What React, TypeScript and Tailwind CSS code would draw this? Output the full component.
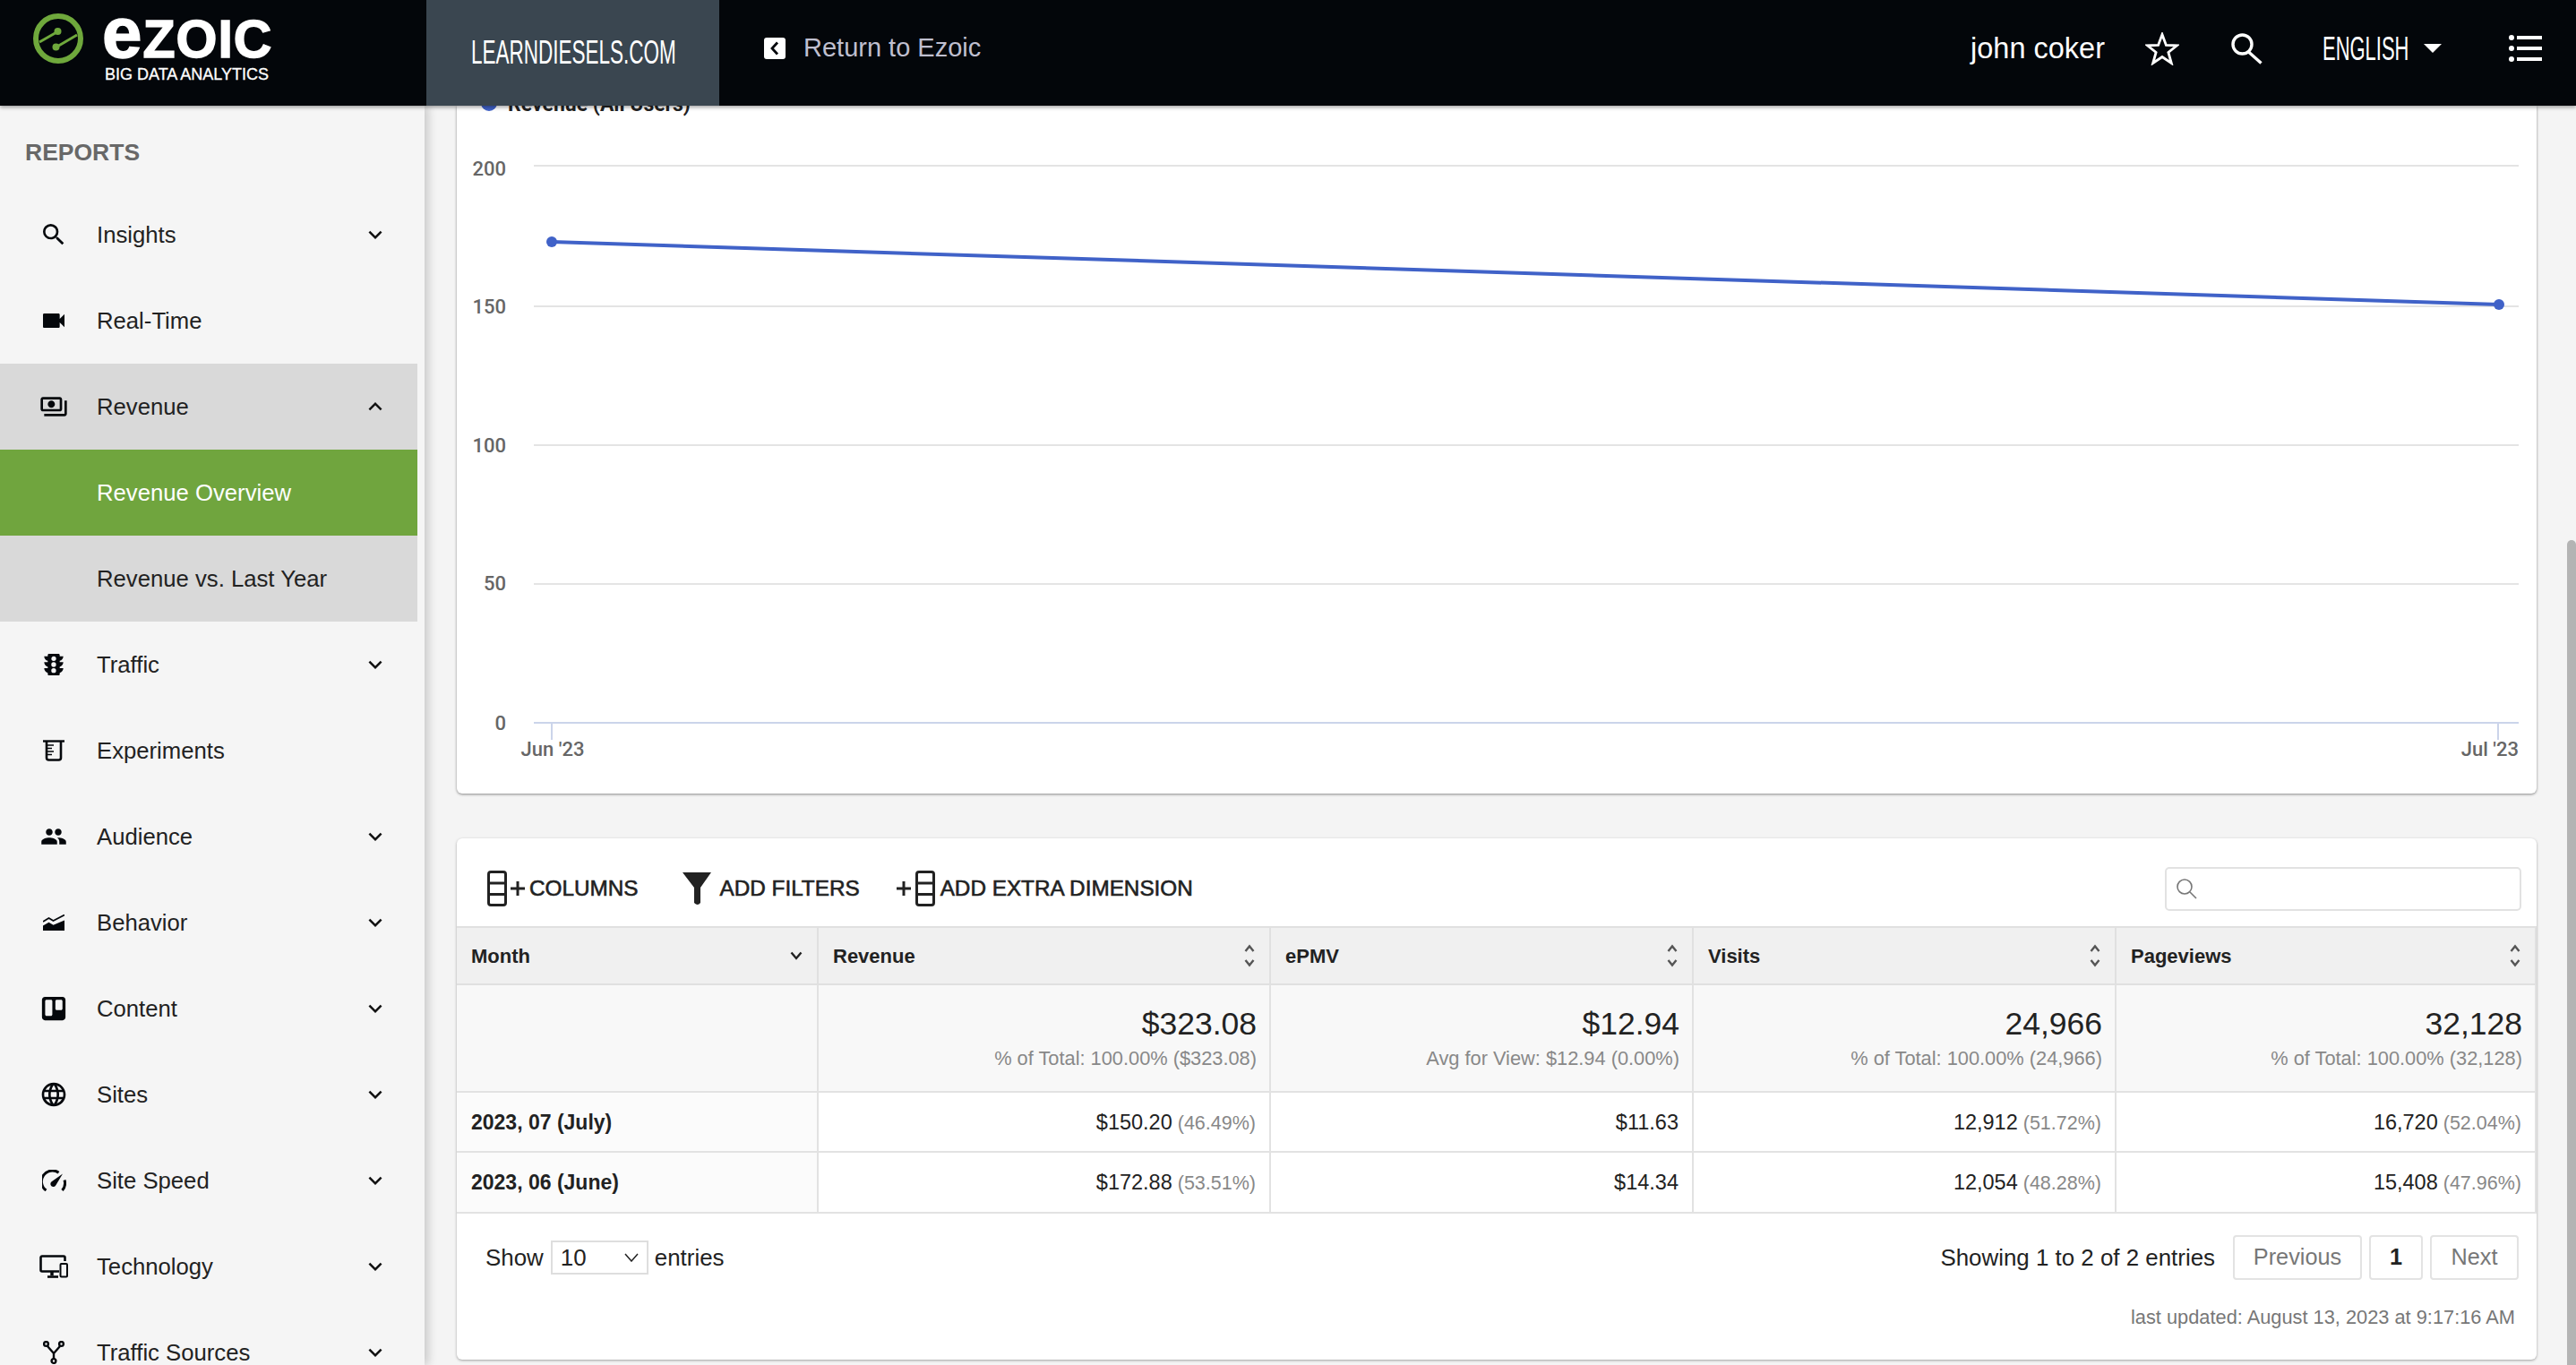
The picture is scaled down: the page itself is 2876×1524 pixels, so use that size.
import React from "react";
import {
  MdSearch,
  MdVideocam,
  MdOutlinePayments,
  MdTraffic,
  MdPeople,
  MdLanguage,
  MdKeyboardArrowDown,
  MdKeyboardArrowUp,
} from "react-icons/md";
import { FaTrello } from "react-icons/fa";

const Beaker = () => (
  <svg width="24" height="24" viewBox="0 0 24 24" fill="none" stroke="#05080c">
    <path d="M0 1.5H24" strokeWidth="2.4" />
    <path d="M4 2v18a2.5 2.5 0 0 0 2.5 2.5h11a2.5 2.5 0 0 0 2.5-2.5V2" strokeWidth="2.6" />
    <path d="M5 6h7M5 9.5h5M5 13h7M5 16.500h5" strokeWidth="1.6" />
  </svg>
);
const AreaLine = () => (
  <svg width="24" height="18" viewBox="0 0 24 18" fill="#05080c">
    <path d="M0 18v-5.500l6.500-3.700 5 3L24 6.500V18z" />
    <path d="M0 8l6.500-4 5 3L24 .5" fill="none" stroke="#05080c" strokeWidth="1.800" />
  </svg>
);
const Gauge = () => (
  <svg width="27" height="24" viewBox="0 0 27 24" fill="none">
    <path d="M4.500 23A12 12 0 0 1 18.500 3.200" stroke="#05080c" strokeWidth="3" />
    <path d="M25 11.500A12 12 0 0 1 22.500 23" stroke="#05080c" strokeWidth="3" />
    <path d="M23 4.500L15.500 17a3.200 3.200 0 1 1-4.500-4z" fill="#05080c" />
  </svg>
);
const Devices = () => (
  <svg width="32" height="26" viewBox="0 0 32 26" fill="none" stroke="#05080c">
    <path d="M22 18.500H3a1.500 1.500 0 0 1-1.500-1.500V3A1.500 1.500 0 0 1 3 1.500h24A1.500 1.500 0 0 1 28.500 3v4" strokeWidth="2.600" />
    <path d="M14 19v4" strokeWidth="3.500" />
    <path d="M9 24.500h12" strokeWidth="2.600" />
    <rect x="23.500" y="10" width="7.500" height="14.500" rx="1" strokeWidth="2" fill="#f5f5f5" />
  </svg>
);
const Branch = () => (
  <svg width="24" height="26" viewBox="0 0 24 26" fill="none" stroke="#05080c" strokeWidth="2.400">
    <circle cx="3.500" cy="3.500" r="2.400" />
    <circle cx="20.500" cy="3.500" r="2.400" />
    <circle cx="12" cy="22.500" r="2.400" />
    <path d="M5 6l7 8 7-8M12 14v6" />
  </svg>
);

type Item = { label: string; icon: React.ReactNode; arrow?: "down" | "up" | null; state?: "open" | "active" | "sub" };

const items: Item[] = [
  { label: "Insights", icon: <MdSearch size={32} color="#05080c" />, arrow: "down" },
  { label: "Real-Time", icon: <MdVideocam size={32} color="#05080c" /> },
  { label: "Revenue", icon: <MdOutlinePayments size={32} color="#05080c" />, arrow: "up", state: "open" },
  { label: "Revenue Overview", icon: null, state: "active" },
  { label: "Revenue vs. Last Year", icon: null, state: "sub" },
  { label: "Traffic", icon: <MdTraffic size={32} color="#05080c" />, arrow: "down" },
  { label: "Experiments", icon: <Beaker /> },
  { label: "Audience", icon: <MdPeople size={30} color="#05080c" />, arrow: "down" },
  { label: "Behavior", icon: <AreaLine />, arrow: "down" },
  { label: "Content", icon: <FaTrello size={30} color="#05080c" />, arrow: "down" },
  { label: "Sites", icon: <MdLanguage size={32} color="#05080c" />, arrow: "down" },
  { label: "Site Speed", icon: <Gauge />, arrow: "down" },
  { label: "Technology", icon: <Devices />, arrow: "down" },
  { label: "Traffic Sources", icon: <Branch />, arrow: "down" },
];

function NavRow({ item }: { item: Item }) {
  const bg =
    item.state === "active"
      ? "bg-[#70a53e] text-white"
      : item.state === "open" || item.state === "sub"
        ? "bg-[#d9d9d9] text-[#222]"
        : "text-[#222]";
  return (
    <div className={`flex h-[96px] w-[466px] shrink-0 items-center pl-[36px] pr-[32px] text-[25.700px] ${bg}`}>
      <span className="flex h-[48px] w-[48px] shrink-0 items-center justify-center">{item.icon}</span>
      <span className="ml-[24px] flex-1 whitespace-nowrap">{item.label}</span>
      {item.arrow === "down" && <MdKeyboardArrowDown size={30} color="#111" />}
      {item.arrow === "up" && <MdKeyboardArrowUp size={30} color="#111" />}
    </div>
  );
}

const ColumnsGlyph = () => (
  <svg width="22" height="40" viewBox="0 0 22 40" fill="none" stroke="#222" strokeWidth="3">
    <rect x="1.500" y="1.500" width="19" height="37" rx="2.500" />
    <path d="M1.500 14h19M1.500 26.500h19" />
  </svg>
);
const Plus = () => (
  <svg width="16" height="16" viewBox="0 0 16 16" stroke="#222" strokeWidth="3">
    <path d="M0 8h16M8 0v16" />
  </svg>
);

const SortIcon = () => (
  <svg width="12" height="26" viewBox="0 0 12 26" fill="none" stroke="#555" strokeWidth="2.400">
    <path d="M1.500 8L6 2.500 10.500 8M1.500 18L6 23.500 10.500 18" />
  </svg>
);

function HeadCell({ label, month }: { label: string; month?: boolean }) {
  return (
    <th className="border-y-2 border-r-2 border-[#e0e0e0] bg-[#f0f0f0] px-[16px] text-left align-middle text-[22px] font-bold text-[#222]">
      <div className="flex items-center justify-between">
        <span>{label}</span>
        {month ? (
          <svg width="14" height="10" viewBox="0 0 14 10" fill="none" stroke="#222" strokeWidth="2.400">
            <path d="M1.500 1.500L7 8l5.500-6.500" />
          </svg>
        ) : (
          <SortIcon />
        )}
      </div>
    </th>
  );
}

function SummaryCell({ value, sub }: { value: string; sub: string }) {
  return (
    <td className="border-b-2 border-r-2 border-[#e2e2e2] bg-[#f8f8f8] pr-[14px] pt-[22px] text-right align-top">
      <div className="text-[35.500px] leading-[42px] text-[#222]">{value}</div>
      <div className="mt-[3px] text-[21.800px] leading-[30px] text-[#888]">{sub}</div>
    </td>
  );
}

function DataCell({ value, pct }: { value: string; pct?: string }) {
  return (
    <td className="border-b-2 border-r-2 border-[#e2e2e2] bg-white pr-[15px] pt-[2px] text-right align-middle text-[23.500px] text-[#222]">
      {value}
      {pct && <span className="text-[21.500px] text-[#888]"> {pct}</span>}
    </td>
  );
}

function Chart() {
  const lines = [
    { y: 67, label: "200", by: 78 },
    { y: 224, label: "150", by: 232 },
    { y: 379, label: "100", by: 387 },
    { y: 534, label: "50", by: 541 },
  ];
  return (
    <svg viewBox="0 0 2322 768" className="block h-[768px] w-full" style={{ fontFamily: "Roboto, sans-serif" }}>
      <circle cx="36" cy="-3" r="9" fill="#4062c8" />
      <text x="57" y="6" fontSize="23" fontWeight="700" fill="#222">Revenue (All Users)</text>
      {lines.map((l) => (
        <g key={l.label}>
          <line x1="86" x2="2302" y1={l.y} y2={l.y} stroke="#e4e4e4" strokeWidth="2" />
          <text x="55" y={l.by} textAnchor="end" fontSize="22" fontWeight="500" fill="#666">{l.label}</text>
        </g>
      ))}
      <line x1="86" x2="2302" y1="689" y2="689" stroke="#cbd4ea" strokeWidth="2" />
      <line x1="106" x2="106" y1="689" y2="708" stroke="#cbd4ea" strokeWidth="2" />
      <line x1="2279" x2="2279" y1="689" y2="708" stroke="#cbd4ea" strokeWidth="2" />
      <text x="55" y="697" textAnchor="end" fontSize="22" fontWeight="500" fill="#666">0</text>
      <text x="107" y="726" textAnchor="middle" fontSize="22" fontWeight="500" fill="#666">Jun '23</text>
      <text x="2302" y="726" textAnchor="end" fontSize="22" fontWeight="500" fill="#666">Jul '23</text>
      <line x1="106" y1="152" x2="2280" y2="222" stroke="#4062c8" strokeWidth="4" />
      <circle cx="106" cy="152" r="6" fill="#4062c8" />
      <circle cx="2280" cy="222" r="6" fill="#4062c8" />
    </svg>
  );
}

export default function App() {
  return (
    <div className="relative flex h-[1524px] w-[2876px] flex-col overflow-hidden bg-[#f4f4f4] font-['Liberation_Sans',Arial,sans-serif] text-[#222]">
      <header className="relative z-20 flex h-[118px] shrink-0 items-stretch bg-[#03060a] shadow-[0_2px_4px_rgba(0,0,0,0.35)]">
        <div className="flex w-[476px] shrink-0 items-start pl-[37px] pt-[15px]">
          <svg width="56" height="56" viewBox="0 0 56 56" fill="none" className="shrink-0">
            <circle cx="28" cy="28" r="25" stroke="#6fa83c" strokeWidth="6" />
            <path d="M7 32l21-12" stroke="#6fa83c" strokeWidth="3" />
            <circle cx="27.500" cy="20" r="4" fill="#6fa83c" />
            <path d="M49 24L26 37.500" stroke="#6fa83c" strokeWidth="3" />
            <circle cx="25.500" cy="37.500" r="4" fill="#6fa83c" />
          </svg>
          <div className="ml-[21px] flex flex-col">
            <div className="-mt-[6px] flex h-[54px] items-baseline whitespace-nowrap font-bold leading-[56px] tracking-[1px] text-white [-webkit-text-stroke:1.500px_white]">
              <span className="text-[80px] leading-[56px]">e</span>
              <span className="text-[59px] uppercase leading-[56px]">zoic</span>
            </div>
            <div className="ml-[3px] mt-[11px] whitespace-nowrap text-[18px] leading-[18px] text-white [-webkit-text-stroke:0.300px_white]">BIG DATA ANALYTICS</div>
          </div>
        </div>
        <div className="flex w-[327px] shrink-0 items-center justify-center overflow-hidden bg-[#3a4650] text-white">
          <span className="inline-block w-[228px] origin-left scale-x-[.625] whitespace-nowrap text-[36px]">LEARNDIESELS.COM</span>
        </div>
        <div className="flex flex-1 items-center pb-[10px]">
          <span className="ml-[50px] flex h-[24px] w-[24px] items-center justify-center rounded-[3px] bg-white">
            <svg width="10" height="16" viewBox="0 0 10 16" fill="none" stroke="#05080c" strokeWidth="2.800">
              <path d="M8 1.500L2 8l6 6.500" />
            </svg>
          </span>
          <span className="ml-[20px] whitespace-nowrap text-[29px] text-[#bfbfcf]">Return to Ezoic</span>
          <span className="ml-auto whitespace-nowrap text-[32.500px] text-white">john coker</span>
          <svg width="38" height="37" viewBox="0 0 38 37" fill="none" stroke="#fff" strokeWidth="2.800" className="ml-[45px]">
            <path d="M19 2.500l4.400 12 12 .4-9.500 7.600 3.400 12L19 27.500 8.700 34.500l3.400-12-9.500-7.600 12-.4z" strokeLinejoin="miter" />
          </svg>
          <svg width="35" height="35" viewBox="0 0 35 35" fill="none" stroke="#fff" strokeWidth="3.400" className="ml-[58px]">
            <circle cx="12.500" cy="12.500" r="10.500" />
            <path d="M19.500 21L33.500 33.500" />
          </svg>
          <span className="ml-[67px] w-[97px] whitespace-nowrap text-white">
            <span className="inline-block origin-left translate-y-[1px] scale-x-[.61] text-[36px]">ENGLISH</span>
          </span>
          <svg width="20" height="10" viewBox="0 0 20 10" fill="#fff" className="ml-[16px]">
            <path d="M0 0h20L10 10z" />
          </svg>
          <svg width="37" height="30" viewBox="0 0 37 30" fill="#fff" className="ml-[75px] mr-[38px]">
            <circle cx="3" cy="3" r="3" />
            <circle cx="3" cy="15" r="3" />
            <circle cx="3" cy="27" r="3" />
            <rect x="9" y="1" width="28" height="4" />
            <rect x="9" y="13" width="28" height="4" />
            <rect x="9" y="25" width="28" height="4" />
          </svg>
        </div>
      </header>

      <div className="relative flex min-h-0 flex-1">
        <aside className="relative z-10 flex w-[474px] shrink-0 flex-col bg-[#f5f5f5] shadow-[4px_0_10px_rgba(0,0,0,0.18)]">
          <div className="flex h-[96px] shrink-0 items-center pl-[28px] pt-[10px] text-[26.500px] font-bold text-[#686868]">REPORTS</div>
          {items.map((it) => (
            <NavRow key={it.label} item={it} />
          ))}
        </aside>

        <main className="flex min-w-0 flex-1 flex-col pl-[36px] pr-[44px]">
          <section className="h-[768px] w-full shrink-0 overflow-hidden rounded-b-[6px] bg-white shadow-[0_1px_3px_rgba(0,0,0,0.45)]">
            <Chart />
          </section>

          <section className="mt-[50px] h-[582px] w-full shrink-0 overflow-hidden rounded-[6px] bg-white shadow-[0_1px_3px_rgba(0,0,0,0.35)]">
            <div className="flex h-[98px] items-center pl-[34px] pr-[17px] pt-[14px] text-[24.300px] text-[#222] [-webkit-text-stroke:0.600px_#222]">
              <ColumnsGlyph />
              <span className="ml-[4px]"><Plus /></span>
              <span className="ml-[5px]">COLUMNS</span>
              <svg width="32" height="37" viewBox="0 0 32 37" fill="#222" className="ml-[49px]">
                <path d="M0 0h32L20 17v17q-3 4-7 0V17z" />
              </svg>
              <span className="ml-[10px]">ADD FILTERS</span>
              <span className="ml-[41px]"><Plus /></span>
              <span className="ml-[5px]"><ColumnsGlyph /></span>
              <span className="ml-[6px]">ADD EXTRA DIMENSION</span>
              <div className="ml-auto flex h-[49px] w-[398px] items-center rounded-[5px] border-2 border-[#e2e2e2] bg-white pl-[10px]">
                <svg width="24" height="24" viewBox="0 0 24 24" fill="none" stroke="#777" strokeWidth="1.600">
                  <circle cx="10" cy="10" r="8" />
                  <path d="M16 16l7 7" />
                </svg>
              </div>
            </div>

            <table className="w-full table-fixed border-separate border-spacing-0">
              <colgroup>
                <col className="w-[404px]" />
                <col className="w-[505px]" />
                <col className="w-[472px]" />
                <col className="w-[472px]" />
                <col className="w-[469px]" />
              </colgroup>
              <thead>
                <tr className="h-[66px]">
                  <HeadCell label="Month" month />
                  <HeadCell label="Revenue" />
                  <HeadCell label="ePMV" />
                  <HeadCell label="Visits" />
                  <HeadCell label="Pageviews" />
                </tr>
              </thead>
              <tbody>
                <tr className="h-[120px]">
                  <td className="border-b-2 border-r-2 border-[#e2e2e2] bg-[#f8f8f8]"></td>
                  <SummaryCell value="$323.08" sub="% of Total: 100.00% ($323.08)" />
                  <SummaryCell value="$12.94" sub="Avg for View: $12.94 (0.00%)" />
                  <SummaryCell value="24,966" sub="% of Total: 100.00% (24,966)" />
                  <SummaryCell value="32,128" sub="% of Total: 100.00% (32,128)" />
                </tr>
                <tr className="h-[67px]">
                  <td className="border-b-2 border-r-2 border-[#e2e2e2] bg-[#fbfbfb] pl-[16px] pt-[2px] text-[23px] font-bold text-[#222]">2023, 07 (July)</td>
                  <DataCell value="$150.20" pct="(46.49%)" />
                  <DataCell value="$11.63" />
                  <DataCell value="12,912" pct="(51.72%)" />
                  <DataCell value="16,720" pct="(52.04%)" />
                </tr>
                <tr className="h-[68px]">
                  <td className="border-b-2 border-r-2 border-[#e2e2e2] bg-[#fbfbfb] pl-[16px] text-[23px] font-bold text-[#222]">2023, 06 (June)</td>
                  <DataCell value="$172.88" pct="(53.51%)" />
                  <DataCell value="$14.34" />
                  <DataCell value="12,054" pct="(48.28%)" />
                  <DataCell value="15,408" pct="(47.96%)" />
                </tr>
              </tbody>
            </table>

            <div className="mt-[24px] flex h-[50px] items-center pl-[32px] pr-[20px] text-[25.900px] text-[#222]">
              <span>Show</span>
              <div className="ml-[8px] flex h-[38px] w-[109px] items-center justify-between border-2 border-[#dedede] pl-[9px] pr-[9px]">
                <span>10</span>
                <svg width="16" height="10" viewBox="0 0 16 10" fill="none" stroke="#222" strokeWidth="1.500">
                  <path d="M1 1l7 8 7-8" />
                </svg>
              </div>
              <span className="ml-[7px]">entries</span>
              <span className="ml-auto">Showing 1 to 2 of 2 entries</span>
              <button className="ml-[20px] h-[50px] w-[144px] rounded-[4px] border-2 border-[#e3e3e3] bg-white text-[25.300px] text-[#777]">Previous</button>
              <button className="ml-[8px] h-[50px] w-[60px] rounded-[4px] border-2 border-[#e3e3e3] bg-white text-[25.300px] font-bold text-[#222]">1</button>
              <button className="ml-[8px] h-[50px] w-[99px] rounded-[4px] border-2 border-[#e3e3e3] bg-white text-[25.300px] text-[#777]">Next</button>
            </div>
            <div className="mr-[24px] mt-[27px] text-right text-[21.800px] leading-[30px] text-[#777]">last updated: August 13, 2023 at 9:17:16 AM</div>
          </section>
        </main>

        <div className="absolute bottom-0 right-0 top-[485px] w-[10px] rounded-t-full bg-[#b4b4b4]"></div>
      </div>
    </div>
  );
}
